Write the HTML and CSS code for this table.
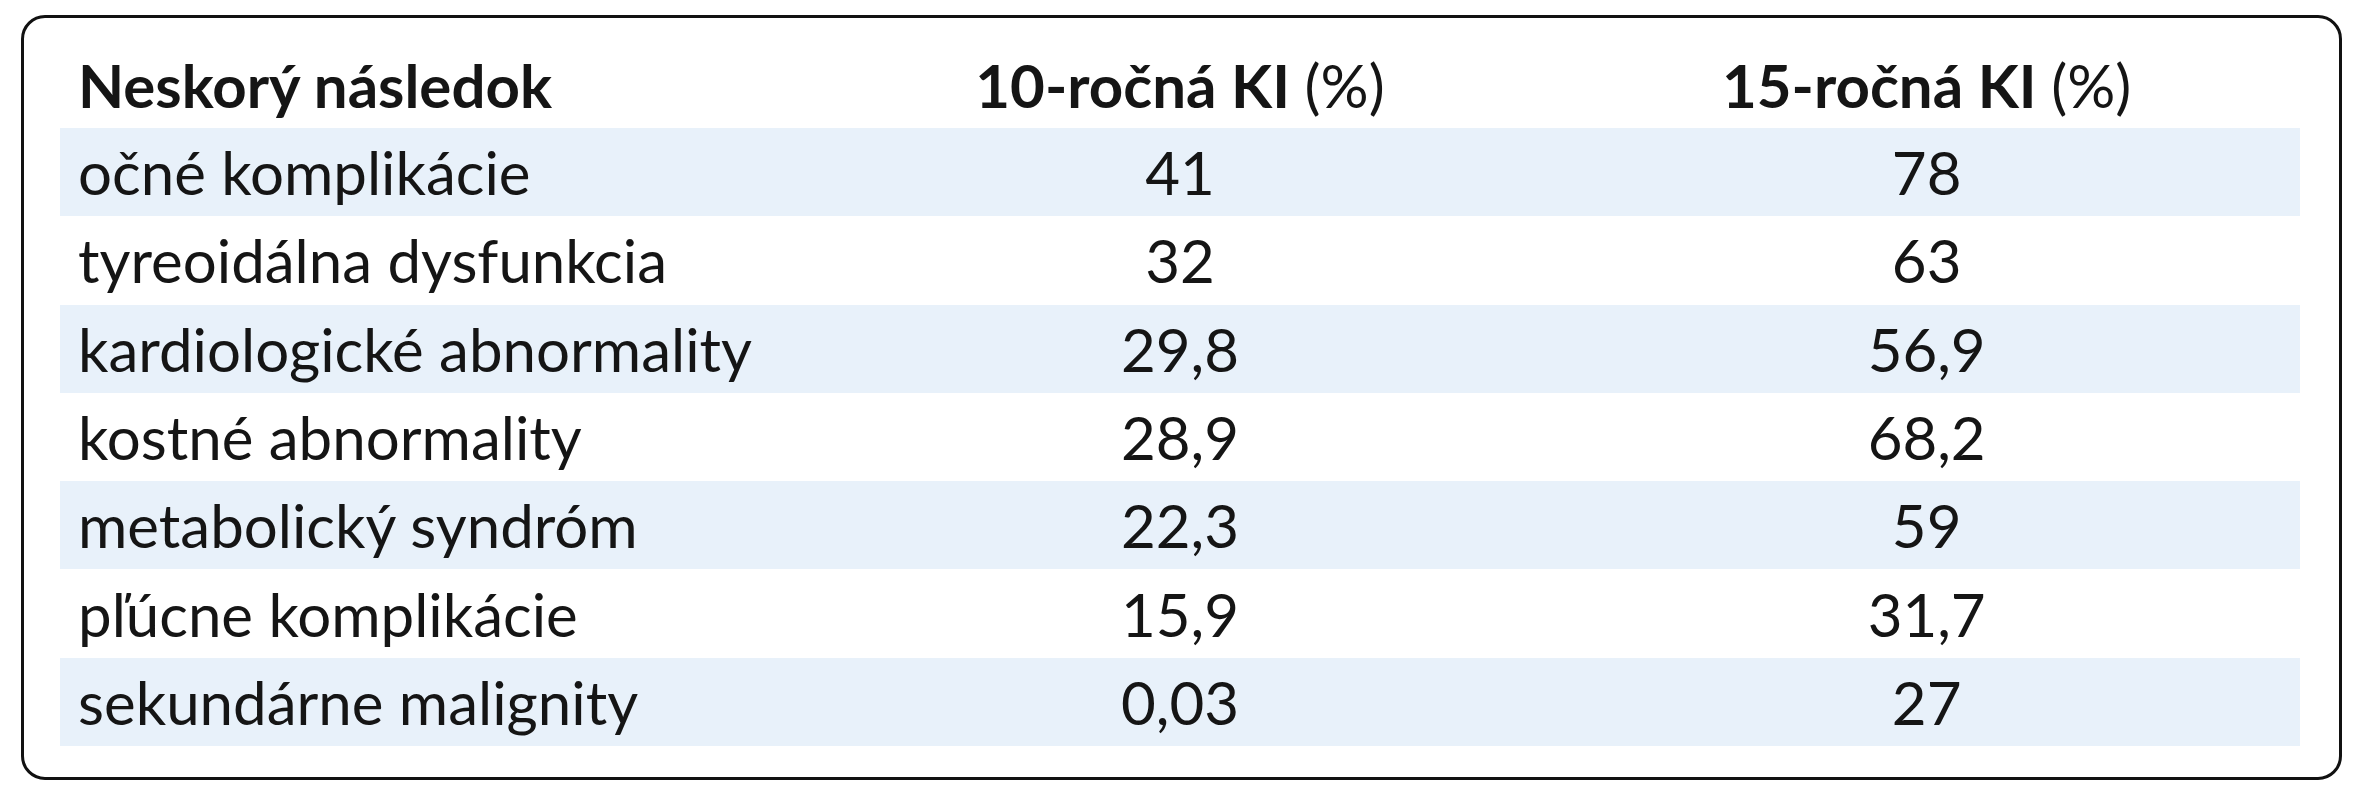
FILE: index.html
```html
<!DOCTYPE html>
<html lang="sk">
<head>
<meta charset="utf-8">
<title>Neskoré následky</title>
<link rel="stylesheet" href="styles.css">
</head>
<body>
<div class="frame">
  <table class="data">
    <thead>
      <tr>
        <th class="c1">Neskorý následok</th>
        <th>10-ročná KI <span class="unit">(%)</span></th>
        <th>15-ročná KI <span class="unit">(%)</span></th>
      </tr>
    </thead>
    <tbody>
      <tr class="alt"><td class="c1">očné komplikácie</td><td>41</td><td>78</td></tr>
      <tr><td class="c1">tyreoidálna dysfunkcia</td><td>32</td><td>63</td></tr>
      <tr class="alt"><td class="c1">kardiologické abnormality</td><td>29,8</td><td>56,9</td></tr>
      <tr><td class="c1">kostné abnormality</td><td>28,9</td><td>68,2</td></tr>
      <tr class="alt"><td class="c1">metabolický syndróm</td><td>22,3</td><td>59</td></tr>
      <tr><td class="c1">pľúcne komplikácie</td><td>15,9</td><td>31,7</td></tr>
      <tr class="alt"><td class="c1">sekundárne malignity</td><td>0,03</td><td>27</td></tr>
    </tbody>
  </table>
</div>
</body>
</html>
```

FILE: styles.css
```css
html, body {
  margin: 0;
  padding: 0;
  background: #ffffff;
}
body {
  padding: 15px 0 0 21px;
  font-family: Lato, "Liberation Sans", sans-serif;
  color: #151515;
}
.frame {
  box-sizing: border-box;
  width: 2321px;
  height: 765px;
  border: 3px solid #111111;
  border-radius: 24px;
  padding: 24px 0 0 36px;
}
.data {
  width: 2240px;
  border-collapse: collapse;
  table-layout: fixed;
  font-size: 60px;
}
.data th {
  height: 86px;
  padding: 0;
  text-align: center;
  vertical-align: middle;
  line-height: 1;
  font-weight: 700;
}
.data td {
  height: 88.3px;
  padding: 0;
  text-align: center;
  vertical-align: middle;
  line-height: 1;
  font-weight: 400;
}
.data .unit {
  font-weight: 400;
}
.data .c1 {
  text-align: left;
  padding-left: 18px;
}
.data tr.alt td {
  background: #e8f1fa;
}
```
